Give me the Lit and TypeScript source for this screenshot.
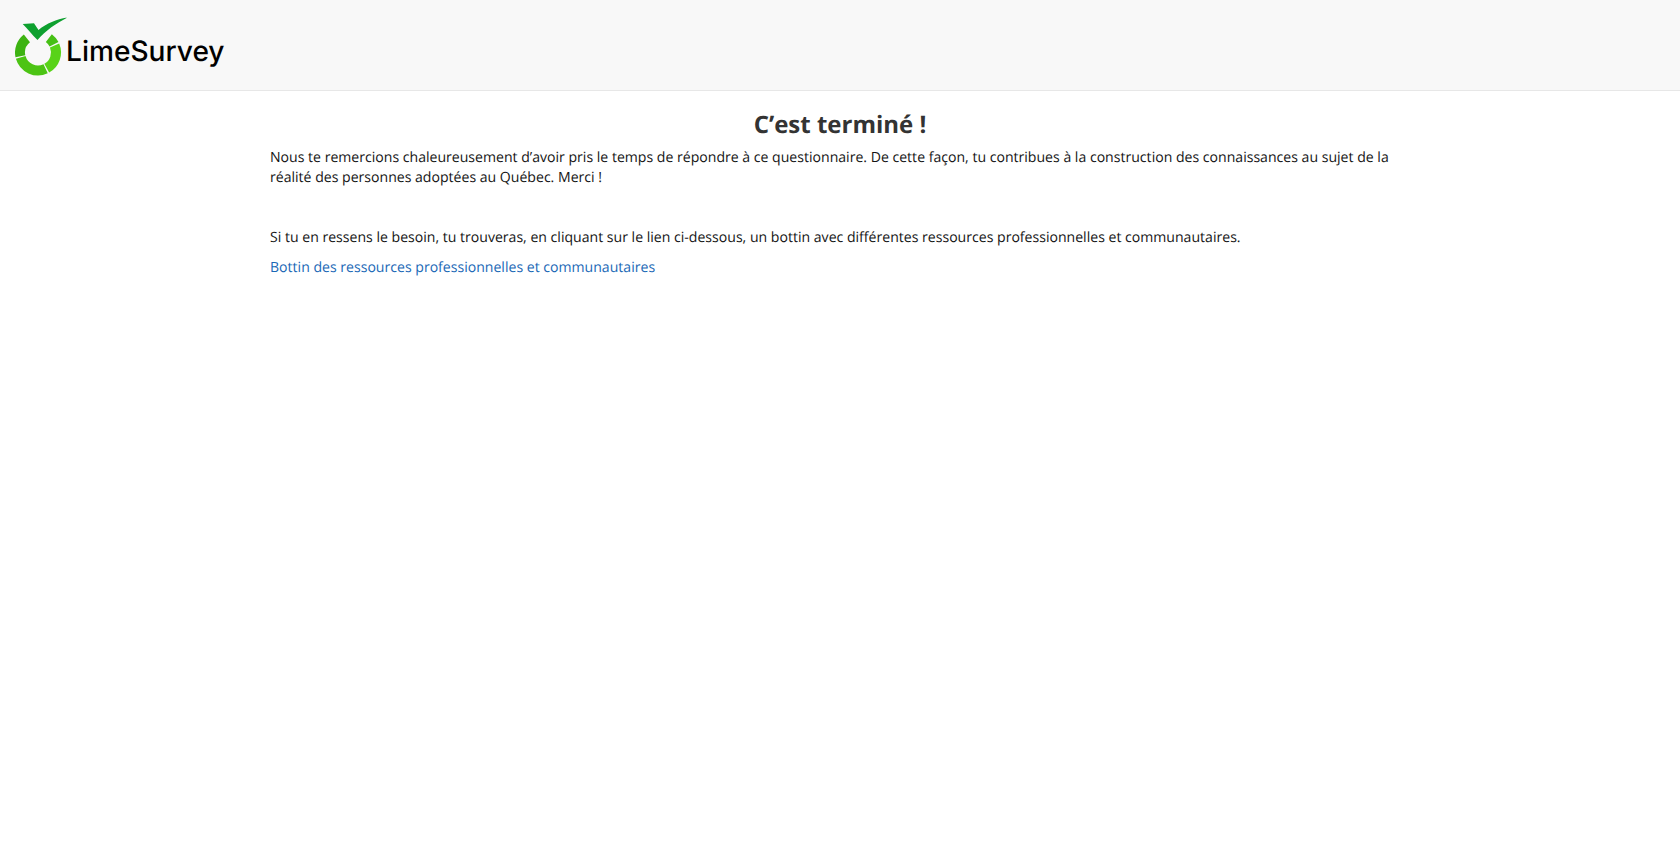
import { LitElement, html, css, svg } from 'lit';
import { customElement } from 'lit/decorators.js';

// ring segments of the logo: start and end angle in degrees, clockwise from east
const RING = [
  { from: 168, to: 232, color: '#3db312' },
  { from: 65, to: 164, color: '#4cc414' },
  { from: -23, to: 61, color: '#58d318' },
  { from: -53, to: -27, color: '#46c015' },
];

function arc(from: number, to: number) {
  const r = 18;
  const cx = 23;
  const cy = 37.5;
  const point = (deg: number) => {
    const a = (deg * Math.PI) / 180;
    return `${(cx + r * Math.cos(a)).toFixed(2)} ${(cy + r * Math.sin(a)).toFixed(2)}`;
  };
  return `M${point(from)} A${r} ${r} 0 ${to - from > 180 ? 1 : 0} 1 ${point(to)}`;
}

@customElement('app-root')
export class AppRoot extends LitElement {
  static styles = css`
    :host {
      display: block;
      min-height: 857px;
      background: #fff;
      font-family: 'Open Sans', sans-serif;
      font-size: 14.09px;
      line-height: 20px;
      color: #141414;
      text-rendering: geometricPrecision;
    }
    .topbar {
      height: 91px;
      box-sizing: border-box;
      background: #f8f8f8;
      border-bottom: 1px solid #e7e7e7;
      padding: 15px 0 0 15px;
    }
    .brand {
      display: flex;
      align-items: flex-start;
    }
    .brand svg {
      display: block;
    }
    .brand span {
      font-family: 'Inter', 'Liberation Sans', sans-serif;
      font-size: 28.1px;
      font-weight: 500;
      line-height: 34px;
      color: #000;
      margin: 19px 0 0 -1px;
    }
    main {
      width: 1140px;
      margin: 0 auto;
    }
    h1 {
      font-size: 24px;
      line-height: 30px;
      font-weight: 700;
      text-align: center;
      color: #333;
      margin: 19px 0 8px;
    }
    p {
      margin: 0;
    }
    .gap {
      margin-top: 40px;
    }
    .link {
      margin-top: 10px;
    }
    a {
      color: #1a68b6;
      text-decoration: none;
    }
  `;

  render() {
    return html`
      <header class="topbar">
        <div class="brand">
          <svg width="52" height="62" viewBox="0 0 52 62" fill="none">
            <path fill="#0ea02f" d="M7.7 9 L19 8.3 L23.5 15 C32 8 42 4 53 2.3 C42 8 31 15 22.5 25 C17 19.5 12.5 14 7.7 9 Z" />
            ${RING.map(
              (s) => svg`<path d=${arc(s.from, s.to)} stroke=${s.color} stroke-width="10" />`,
            )}
          </svg>
          <span>LimeSurvey</span>
        </div>
      </header>
      <main>
        <h1>C’est terminé !</h1>
        <p>Nous te remercions chaleureusement d’avoir pris le temps de répondre à ce questionnaire. De cette façon, tu contribues à la construction des connaissances au sujet de la réalité des personnes adoptées au Québec. Merci !</p>
        <p class="gap">Si tu en ressens le besoin, tu trouveras, en cliquant sur le lien ci-dessous, un bottin avec différentes ressources professionnelles et communautaires.</p>
        <p class="link"><a href="#">Bottin des ressources professionnelles et communautaires</a></p>
      </main>
    `;
  }
}
